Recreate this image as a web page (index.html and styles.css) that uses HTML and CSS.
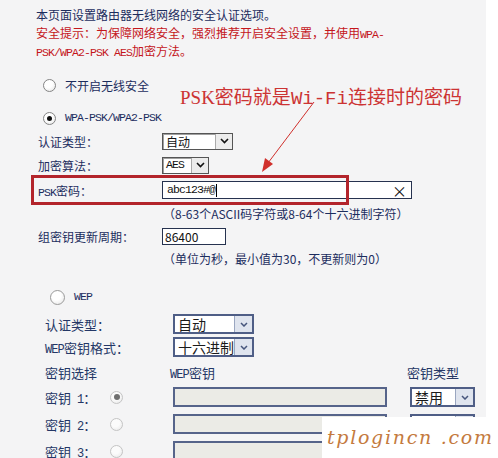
FILE: index.html
```html
<!DOCTYPE html>
<html lang="zh-CN">
  <head>
    <meta charset="UTF-8" />
    <title>无线网络安全设置</title>
    <link rel="stylesheet" href="styles.css">
  </head>
  <body>
    <div class="page">
      <div class="intro">
        <p>本页面设置路由器无线网络的安全认证选项。</p>
        <p class="warn">安全提示：为保障网络安全，强烈推荐开启安全设置，并使用<span class="m">WPA-</span><br /><span class="m">PSK/WPA2-PSK AES</span>加密方法。</p>
      </div>

      <div class="opt opt-off"><span class="radio"></span><span>不开启无线安全</span></div>
      <div class="opt opt-wpa"><span class="radio on"></span><span class="m">WPA-PSK/WPA2-PSK</span></div>

      <div class="wpa">
        <div class="cell">认证类型：</div>
        <div class="cell">
          <div class="sel w71"><span class="sel-txt">自动</span><span class="sel-btn"><svg width="9" height="6" viewBox="0 0 9 6"><path d="M1 1L4.5 4.5L8 1" fill="none" stroke="#111" stroke-width="1.6"/></svg></span></div>
        </div>
        <div class="cell">加密算法：</div>
        <div class="cell">
          <div class="sel w47"><span class="sel-txt m">AES</span><span class="sel-btn"><svg width="9" height="6" viewBox="0 0 9 6"><path d="M1 1L4.5 4.5L8 1" fill="none" stroke="#111" stroke-width="1.6"/></svg></span></div>
        </div>
        <div class="cell"><span><span class="m">PSK</span>密码：</span></div>
        <div class="cell">
          <div class="inp psk"><span class="m dark">abc123#@</span><span class="caret"></span><span class="clear">×</span></div>
        </div>
        <div class="cell hint">（8-63个ASCII码字符或8-64个十六进制字符）</div>
        <div class="cell">组密钥更新周期：</div>
        <div class="cell">
          <div class="inp period">86400</div>
        </div>
        <div class="cell hint">（单位为秒，最小值为30，不更新则为0）</div>
      </div>

      <div class="opt opt-wep"><span class="radio lg"></span><span class="m">WEP</span></div>

      <div class="wep">
        <div class="cell span2">认证类型：</div>
        <div class="cell span2">
          <div class="wsel w81"><span class="sel-txt">自动</span><span class="wsel-btn"><svg width="8" height="5" viewBox="0 0 8 5"><path d="M1 1L4 4L7 1" fill="none" stroke="#46557c" stroke-width="1.5"/></svg></span></div>
        </div>
        <div class="cell span2"><span><span class="m">WEP</span>密钥格式：</span></div>
        <div class="cell span2">
          <div class="wsel w81"><span class="sel-txt">十六进制</span><span class="wsel-btn"><svg width="8" height="5" viewBox="0 0 8 5"><path d="M1 1L4 4L7 1" fill="none" stroke="#46557c" stroke-width="1.5"/></svg></span></div>
        </div>

        <div class="cell span2">密钥选择</div>
        <div class="cell shift"><span><span class="m">WEP</span>密钥</span></div>
        <div class="cell shift">密钥类型</div>

        <div class="cell"><span>密钥 <span class="m num">1</span>：</span></div>
        <div class="cell"><span class="radio dim on"></span></div>
        <div class="cell"><div class="kin"></div></div>
        <div class="cell">
          <div class="wsel w65"><span class="sel-txt">禁用</span><span class="wsel-btn"><svg width="8" height="5" viewBox="0 0 8 5"><path d="M1 1L4 4L7 1" fill="none" stroke="#46557c" stroke-width="1.5"/></svg></span></div>
        </div>

        <div class="cell"><span>密钥 <span class="m num">2</span>：</span></div>
        <div class="cell"><span class="radio dim"></span></div>
        <div class="cell"><div class="kin"></div></div>
        <div class="cell">
          <div class="wsel w65"><span class="sel-txt"></span><span class="wsel-btn"></span></div>
        </div>

        <div class="cell"><span>密钥 <span class="m num">3</span>：</span></div>
        <div class="cell"><span class="radio dim"></span></div>
        <div class="cell"><div class="kin"></div></div>
        <div class="cell"></div>
      </div>

      <!-- annotation drawn over the screenshot -->
      <div class="hl"></div>
      <div class="callout"><span class="serif">PSK</span>密码就是<span class="mono">Wi-Fi</span>连接时的密码</div>
      <svg class="arrow" width="486" height="458" viewBox="0 0 486 458">
        <line x1="314" y1="102" x2="268" y2="163" stroke="#d0302c" stroke-width="1"/>
        <polygon points="262,172 273,164 265,158" fill="#d0302c"/>
      </svg>
      <div class="mark">tplogincn .com</div>
    </div>
  </body>
</html>
```

FILE: styles.css
```css
body {
  margin: 0;
  background-color: #fff;
  font-family: "Noto Sans CJK SC", sans-serif;
  font-size: 12px;
  color: #1c2d5e;
}
p {
  margin: 0;
}
.page {
  position: relative;
  width: 498px;
  height: 458px;
  background: linear-gradient(to right, #f4f4f5 486px, #fff 486px);
  overflow: hidden;
}
.m {
  font-family: "Liberation Mono", monospace;
  font-size: 11.5px;
  line-height: 1;
  letter-spacing: -0.9px;
}
.intro {
  padding: 6px 0 0 36px;
  line-height: 18px;
}
.warn {
  color: #c4161c;
}
.opt {
  display: flex;
  align-items: center;
  gap: 9px;
  height: 20px;
}
.opt-off {
  margin: 15px 0 0 43px;
}
.opt-wpa {
  margin: 13px 0 0 43px;
}
.opt-wep {
  margin: 19px 0 0 50px;
}
.radio {
  flex: none;
  display: flex;
  align-items: center;
  justify-content: center;
  width: 13px;
  height: 13px;
  box-sizing: border-box;
  border: 1px solid #858585;
  border-radius: 50%;
  background: radial-gradient(circle at 40% 35%, #fff 40%, #e2e2e2);
}
.radio.on::after {
  content: "";
  width: 5px;
  height: 5px;
  border-radius: 50%;
  background-color: #111;
}
.radio.lg {
  width: 15px;
  height: 15px;
  border-color: #9a9a9a;
}
.radio.dim {
  border-color: #c4c4c4;
  background: radial-gradient(circle at 40% 35%, #fbfbfb 40%, #e6e6e6);
}
.radio.dim.on::after {
  width: 6px;
  height: 6px;
  background-color: #6f6f6f;
}

/* WPA block */
.wpa {
  display: grid;
  grid-template-columns: 124px auto;
  grid-template-rows: 24px 25px 23px 23px 22px 20px;
  margin: 3px 0 0 38px;
}
.cell {
  display: flex;
  align-items: center;
  height: 20px;
  white-space: nowrap;
}
.hint {
  grid-column: 2;
  padding-left: 1px;
}
.sel {
  display: flex;
  height: 17px;
  box-sizing: border-box;
  border: 1px solid #555;
  box-shadow: inset 1px 1px 0 #a0a0a0;
  background-color: #fff;
}
.sel-txt {
  flex: 1;
  padding-left: 3px;
  display: flex;
  align-items: center;
  color: #111;
}
.sel-btn {
  width: 16px;
  display: flex;
  align-items: center;
  justify-content: center;
  border-left: 1px solid #aaa;
  background-color: #ececec;
}
.w71 {
  width: 71px;
}
.w47 {
  width: 47px;
}
.inp {
  display: flex;
  align-items: center;
  box-sizing: border-box;
  border: 1px solid #26324f;
  background-color: #fff;
  color: #111;
  padding-left: 4px;
}
.psk {
  width: 250px;
  height: 18px;
}
.dark {
  color: #111;
}
.caret {
  width: 1px;
  height: 13px;
  margin-left: 1px;
  background-color: #000;
}
.clear {
  margin-left: auto;
  padding-right: 4px;
  font-size: 15px;
  line-height: 15px;
}
.period {
  width: 64px;
  height: 17px;
  padding-left: 2px;
}

/* WEP block */
.wep {
  display: grid;
  grid-template-columns: 65px 63px 237px 1fr;
  grid-template-rows: 23px 25px 25px 27px 27px 20px;
  margin: 7px 0 0 45px;
  font-size: 13px;
  color: #243766;
}
.wep .m {
  font-size: 12px;
}
.wep .num {
  margin-left: 3px;
}
.span2 {
  grid-column: span 2;
}
.shift {
  margin-left: -3px;
}
.wsel {
  display: flex;
  height: 20px;
  box-sizing: border-box;
  border: 2px solid #4f5e86;
  background-color: #fff;
}
.wsel .sel-txt {
  font-size: 14px;
  color: #1a1a1a;
}
.wsel-btn {
  width: 17px;
  display: flex;
  align-items: center;
  justify-content: center;
  border-left: 1px solid #9aa6c0;
  background-color: #dfe4ee;
}
.w81 {
  width: 81px;
}
.w65 {
  width: 65px;
}
.kin {
  width: 214px;
  height: 20px;
  box-sizing: border-box;
  border: 2px solid #56648a;
  background-color: #ebebe6;
}

/* annotation overlay */
.hl {
  position: absolute;
  left: 31px;
  top: 175px;
  width: 318px;
  height: 30px;
  box-sizing: border-box;
  border: 3px solid #b3242b;
}
.callout {
  position: absolute;
  left: 180px;
  top: 84px;
  font-size: 19px;
  line-height: 24px;
  color: #cc3333;
  white-space: nowrap;
}
.callout .serif {
  font-family: "Liberation Serif", serif;
}
.callout .mono {
  font-family: "Liberation Mono", monospace;
}
.arrow {
  position: absolute;
  left: 0;
  top: 0;
  pointer-events: none;
}
.mark {
  position: absolute;
  right: 0;
  bottom: 0;
  width: 176px;
  height: 41px;
  padding-left: 5px;
  box-sizing: border-box;
  background-color: #fff;
  font-family: "DejaVu Serif", serif;
  font-style: italic;
  font-size: 19px;
  line-height: 40px;
  letter-spacing: 1.7px;
  color: #c47a3e;
  white-space: nowrap;
}
```
